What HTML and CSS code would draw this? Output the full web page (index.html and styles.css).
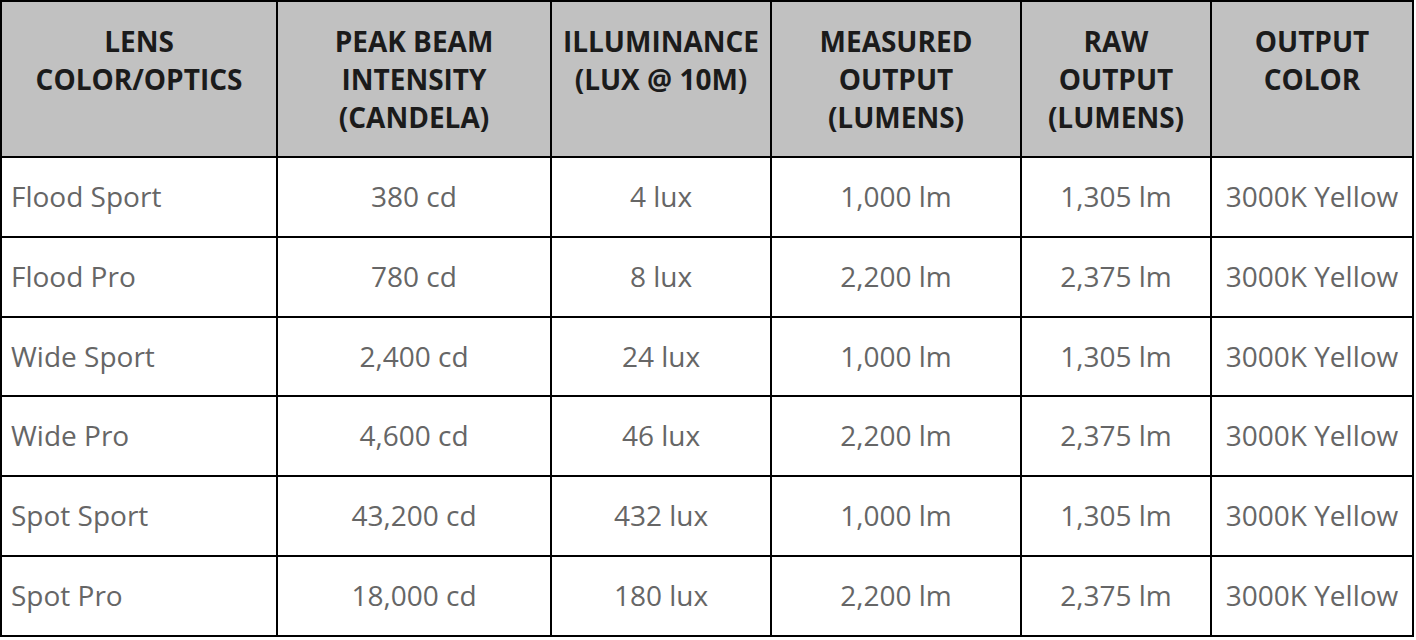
FILE: index.html
```html
<!DOCTYPE html>
<html>
<head>
<meta charset="utf-8">
<link rel="stylesheet" href="styles.css">
</head>
<body>
<table class="spec">
  <colgroup>
    <col class="c1"><col class="c2"><col class="c3"><col class="c4"><col class="c5"><col class="c6">
  </colgroup>
  <thead>
    <tr>
      <th>LENS<br>COLOR/OPTICS</th>
      <th>PEAK BEAM<br>INTENSITY<br>(CANDELA)</th>
      <th>ILLUMINANCE<br>(LUX @ 10M)</th>
      <th>MEASURED<br>OUTPUT<br>(LUMENS)</th>
      <th>RAW<br>OUTPUT<br>(LUMENS)</th>
      <th>OUTPUT<br>COLOR</th>
    </tr>
  </thead>
  <tbody>
    <tr><td>Flood Sport</td><td>380 cd</td><td>4 lux</td><td>1,000 lm</td><td>1,305 lm</td><td>3000K Yellow</td></tr>
    <tr><td>Flood Pro</td><td>780 cd</td><td>8 lux</td><td>2,200 lm</td><td>2,375 lm</td><td>3000K Yellow</td></tr>
    <tr><td>Wide Sport</td><td>2,400 cd</td><td>24 lux</td><td>1,000 lm</td><td>1,305 lm</td><td>3000K Yellow</td></tr>
    <tr><td>Wide Pro</td><td>4,600 cd</td><td>46 lux</td><td>2,200 lm</td><td>2,375 lm</td><td>3000K Yellow</td></tr>
    <tr><td>Spot Sport</td><td>43,200 cd</td><td>432 lux</td><td>1,000 lm</td><td>1,305 lm</td><td>3000K Yellow</td></tr>
    <tr><td>Spot Pro</td><td>18,000 cd</td><td>180 lux</td><td>2,200 lm</td><td>2,375 lm</td><td>3000K Yellow</td></tr>
  </tbody>
</table>
</body>
</html>
```
FILE: styles.css
```css
html, body {
  margin: 0;
  padding: 0;
  background: #ffffff;
}
.spec {
  border-collapse: collapse;
  table-layout: fixed;
  width: 1414px;
  font-family: "Open Sans", "Noto Sans", sans-serif;
  font-size: 28px;
}
.c1 { width: 276px; }
.c2 { width: 274px; }
.c3 { width: 220px; }
.c4 { width: 250px; }
.c5 { width: 190px; }
.c6 { width: 202px; }
.spec th,
.spec td {
  border: 2px solid #000000;
  padding: 0;
}
.spec th {
  background: #c1c1c1;
  color: #1b1b1b;
  font-weight: 700;
  line-height: 38px;
  text-align: center;
  vertical-align: top;
  padding-top: 20px;
  height: 134px;
}
.spec td {
  color: #666666;
  font-weight: 400;
  line-height: 38px;
  text-align: center;
  vertical-align: middle;
  padding-bottom: 2px;
  height: 76px;
}
.spec td:first-child {
  text-align: left;
  padding-left: 9px;
}
.spec tbody tr:nth-child(3) td {
  height: 75px;
}
```
